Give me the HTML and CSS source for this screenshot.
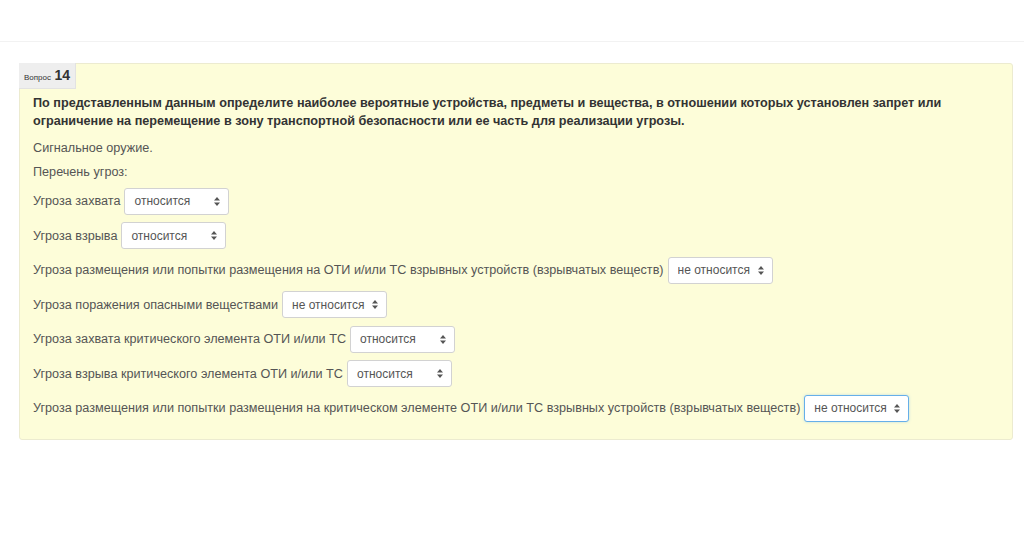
FILE: index.html
```html
<!DOCTYPE html>
<html>
<head>
    <title>Вопрос 14</title>
    <meta name="viewport" content="width=device-width, initial-scale=1.0">
    <link rel="stylesheet" href="styles.css">
</head>
<body>
    <div class="topbar"></div>

    <div class="que">
        <div class="info">
            <span class="lbl">Вопрос</span> <span class="qno">14</span>
        </div>
        <div class="content">
            <div class="qtext">
                По представленным данным определите наиболее вероятные устройства, предметы и вещества, в отношении которых установлен запрет или ограничение на перемещение в зону транспортной безопасности или ее часть для реализации угрозы.
            </div>
            <p class="line">Сигнальное оружие.</p>
            <p class="line">Перечень угроз:</p>

            <div class="rows">
                <div class="row">
                    <span class="text">Угроза захвата</span>
                    <span class="sel"><select><option>относится</option><option>не относится</option></select>
                        <svg class="arr" viewBox="0 0 6 9" width="6" height="9"><path d="M3 0L6 3.5H0zM3 9L0 5.5H6z"/></svg></span>
                </div>
                <div class="row">
                    <span class="text">Угроза взрыва</span>
                    <span class="sel"><select><option>относится</option><option>не относится</option></select>
                        <svg class="arr" viewBox="0 0 6 9" width="6" height="9"><path d="M3 0L6 3.5H0zM3 9L0 5.5H6z"/></svg></span>
                </div>
                <div class="row">
                    <span class="text">Угроза размещения или попытки размещения на ОТИ и/или ТС взрывных устройств (взрывчатых веществ)</span>
                    <span class="sel"><select><option>не относится</option><option>относится</option></select>
                        <svg class="arr" viewBox="0 0 6 9" width="6" height="9"><path d="M3 0L6 3.5H0zM3 9L0 5.5H6z"/></svg></span>
                </div>
                <div class="row">
                    <span class="text">Угроза поражения опасными веществами</span>
                    <span class="sel"><select><option>не относится</option><option>относится</option></select>
                        <svg class="arr" viewBox="0 0 6 9" width="6" height="9"><path d="M3 0L6 3.5H0zM3 9L0 5.5H6z"/></svg></span>
                </div>
                <div class="row">
                    <span class="text">Угроза захвата критического элемента ОТИ и/или ТС</span>
                    <span class="sel"><select><option>относится</option><option>не относится</option></select>
                        <svg class="arr" viewBox="0 0 6 9" width="6" height="9"><path d="M3 0L6 3.5H0zM3 9L0 5.5H6z"/></svg></span>
                </div>
                <div class="row">
                    <span class="text">Угроза взрыва критического элемента ОТИ и/или ТС</span>
                    <span class="sel"><select><option>относится</option><option>не относится</option></select>
                        <svg class="arr" viewBox="0 0 6 9" width="6" height="9"><path d="M3 0L6 3.5H0zM3 9L0 5.5H6z"/></svg></span>
                </div>
                <div class="row">
                    <span class="text">Угроза размещения или попытки размещения на критическом элементе ОТИ и/или ТС взрывных устройств (взрывчатых веществ)</span>
                    <span class="sel"><select class="focus"><option>не относится</option><option>относится</option></select>
                        <svg class="arr" viewBox="0 0 6 9" width="6" height="9"><path d="M3 0L6 3.5H0zM3 9L0 5.5H6z"/></svg></span>
                </div>
            </div>
        </div>
    </div>
</body>
</html>
```

FILE: styles.css
```css
body {
    margin: 0;
    background-color: #fff;
    font-family: 'Liberation Sans', Arial, sans-serif;
    font-size: 12.65px;
    color: #555;
}

.topbar {
    height: 41px;
    border-bottom: 1px solid #f2f2f2;
}

.que {
    margin: 21px 11px 0 19px;
    background-color: #fdfdd9;
    border: 1px solid #ecebd0;
    border-radius: 3px;
}

.info {
    display: inline-block;
    background-color: #eeeeee;
    border-right: 1px solid #e2e2e2;
    border-bottom: 1px solid #e2e2e2;
    padding: 4px 5px;
    height: 17px;
    line-height: 17px;
    color: #333;
    margin: -1px 0 0 -1px;
}

.info .lbl {
    font-size: 8px;
}

.info .qno {
    font-size: 14px;
    font-weight: bold;
}

.content {
    padding: 5px 13px 17px 13px;
}

.qtext {
    font-weight: bold;
    color: #333;
    line-height: 18px;
    margin-bottom: 9px;
}

.line {
    margin: 0 0 6px 0;
    line-height: 18px;
}

.rows {
    display: flex;
    flex-direction: column;
    gap: 7.5px;
    margin-top: 6.5px;
}

.row {
    display: flex;
    align-items: center;
    gap: 4px;
}

.sel {
    position: relative;
    display: inline-block;
}

.sel select {
    appearance: none;
    -webkit-appearance: none;
    display: block;
    width: 105px;
    height: 27px;
    padding: 0 0 0 9px;
    font-family: 'Liberation Sans', Arial, sans-serif;
    font-size: 12px;
    color: #555;
    background-color: #fff;
    border: 1px solid #d2d2d2;
    border-radius: 3px;
}

.sel select.focus {
    border-color: #66afe9;
    box-shadow: 0 0 3px rgba(102, 175, 233, 0.4);
}

.sel .arr {
    position: absolute;
    right: 9px;
    top: 9px;
    fill: #555;
    pointer-events: none;
}
```
